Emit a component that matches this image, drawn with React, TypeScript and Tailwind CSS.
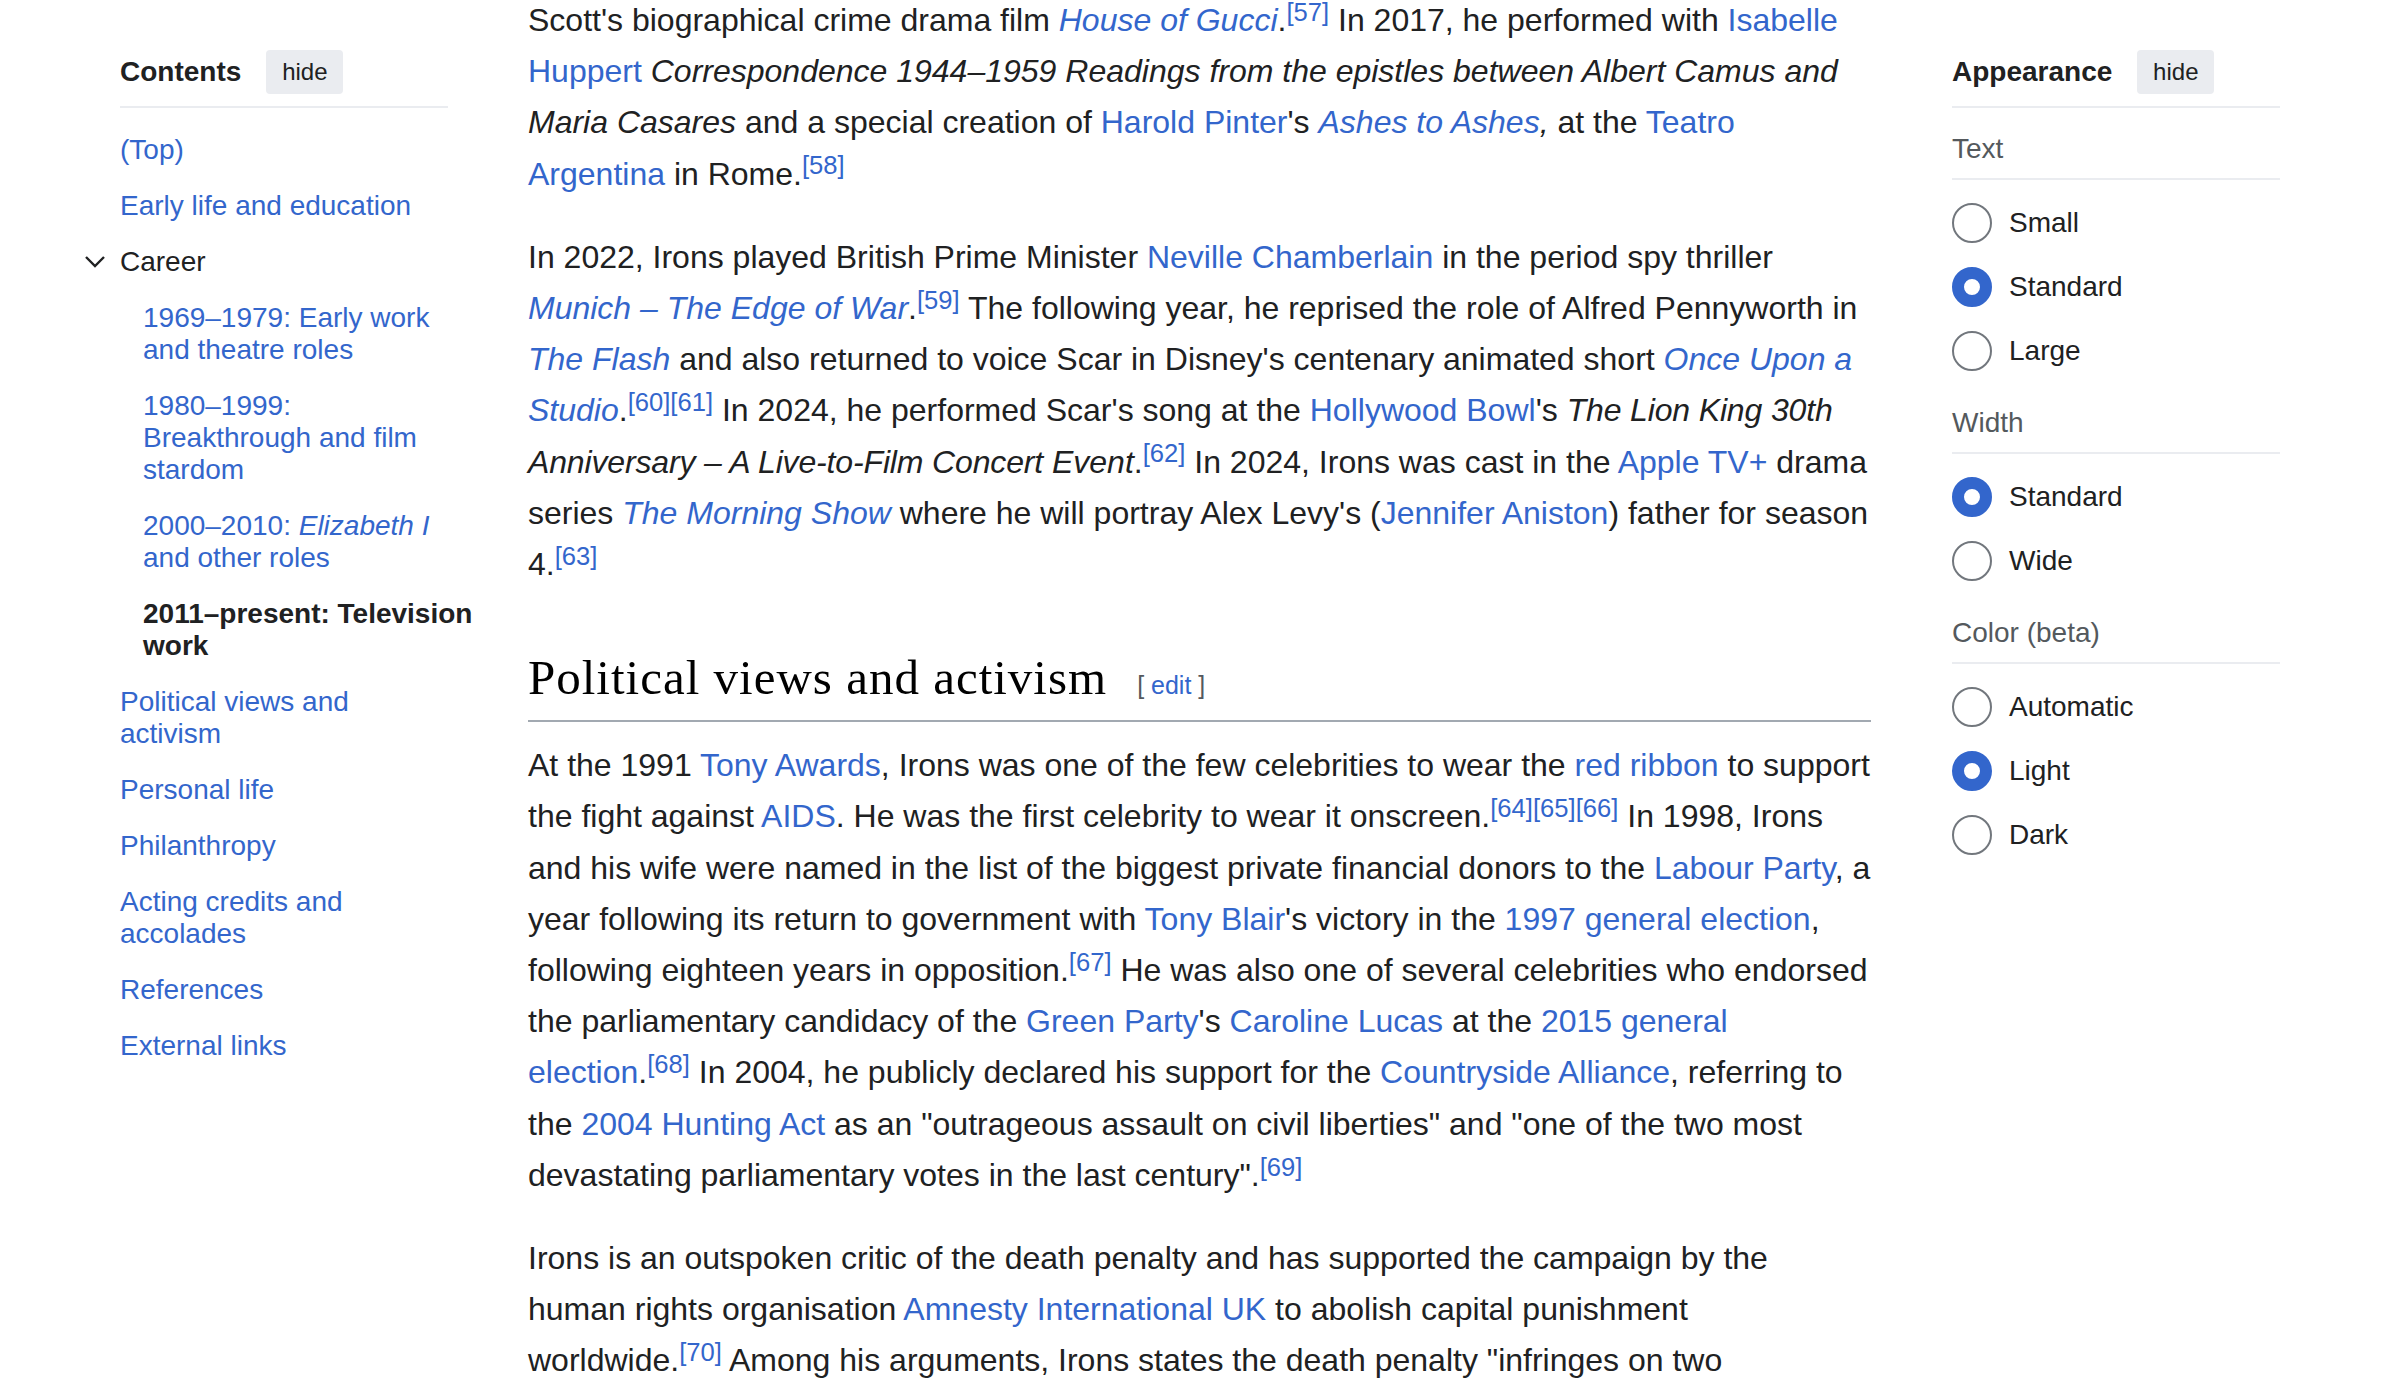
import React from 'react';

const linkCls = 'text-[#3366cc]';

function L({ children, i }: { children: React.ReactNode; i?: boolean }) {
  return <a className={`${linkCls} ${i ? 'italic' : ''}`}>{children}</a>;
}

function Ref({ n }: { n: string }) {
  return <sup className="text-[80%] top-[-0.4em] text-[#3366cc]">[{n}]</sup>;
}

// keeps a word glued to its footnote marker
function W({ children }: { children: React.ReactNode }) {
  return <span className="whitespace-nowrap">{children}</span>;
}

function HideButton() {
  return (
    <button className="ml-[25px] w-[77px] h-[44px] rounded-[4px] bg-[#eaecf0] text-[24px] text-[#202122]">
      hide
    </button>
  );
}

function TocItem({ children, sub, active }: { children: React.ReactNode; sub?: boolean; active?: boolean }) {
  const width = active ? 'w-[365px] pl-[23px]' : sub ? 'w-[341px] pl-[23px]' : 'w-[331px]';
  return (
    <li
      className={`py-[12px] leading-[32px] ${width} ${active ? 'font-bold text-[#202122]' : 'text-[#3366cc]'}`}
    >
      {children}
    </li>
  );
}

function Contents() {
  return (
    <nav className="w-[328px] shrink-0 text-[28px]">
      <div className="mt-[50px] flex items-center pb-[12px] border-b-2 border-[#eaecf0]">
        <span className="font-bold">Contents</span>
        <HideButton />
      </div>
      <ul className="mt-[14px]">
        <TocItem>(Top)</TocItem>
        <TocItem>Early life and education</TocItem>
        <li className="py-[12px] leading-[32px] flex items-center -ml-[37px]">
          <svg width="24" height="14" viewBox="0 0 24 14" className="mr-[13px]">
            <path d="M3 2 L12 11 L21 2" fill="none" stroke="#202122" strokeWidth="2.4" />
          </svg>
          <span>Career</span>
        </li>
        <TocItem sub>1969–1979: Early work and theatre roles</TocItem>
        <TocItem sub>1980–1999: Breakthrough and film stardom</TocItem>
        <TocItem sub>
          2000–2010: <i>Elizabeth I</i> and other roles
        </TocItem>
        <TocItem sub active>
          2011–present: Television work
        </TocItem>
        <TocItem>Political views and activism</TocItem>
        <TocItem>Personal life</TocItem>
        <TocItem>Philanthropy</TocItem>
        <TocItem>Acting credits and accolades</TocItem>
        <TocItem>References</TocItem>
        <TocItem>External links</TocItem>
      </ul>
    </nav>
  );
}

function Radio({ label, checked }: { label: string; checked?: boolean }) {
  return (
    <label className="flex items-center h-[40px]">
      <span
        className={`w-[40px] h-[40px] rounded-full bg-white ${
          checked ? 'border-[12px] border-[#3366cc]' : 'border-2 border-[#72777d]'
        }`}
      />
      <span className="ml-[17px]">{label}</span>
    </label>
  );
}

function Group({ title, options, selected }: { title: string; options: string[]; selected: string }) {
  return (
    <div className="mt-[24px]">
      <div className="leading-[32px] pb-[13px] border-b-2 border-[#eaecf0] text-[#54595d]">{title}</div>
      <div className="mt-[23px] flex flex-col gap-[24px]">
        {options.map((o) => (
          <Radio key={o} label={o} checked={o === selected} />
        ))}
      </div>
    </div>
  );
}

function Appearance() {
  return (
    <aside className="w-[328px] ml-[81px] shrink-0 text-[28px]">
      <div className="mt-[50px] flex items-center pb-[12px] border-b-2 border-[#eaecf0]">
        <span className="font-bold">Appearance</span>
        <HideButton />
      </div>
      <div className="mt-[1px] flex flex-col gap-[12px]">
        <Group title="Text" options={['Small', 'Standard', 'Large']} selected="Standard" />
        <Group title="Width" options={['Standard', 'Wide']} selected="Standard" />
        <Group title="Color (beta)" options={['Automatic', 'Light', 'Dark']} selected="Light" />
      </div>
    </aside>
  );
}

function Article() {
  return (
    <main className="w-[1343px] ml-[80px] shrink-0 -mt-[5px] text-[32px] leading-[51.2px]">
      <p className="mb-[32px]">
        Scott's biographical crime drama film{' '}
        <W>
          <L i>House of Gucci</L>.<Ref n="57" />
        </W>{' '}
        In 2017, he performed with <L>Isabelle Huppert</L>{' '}
        <i>Correspondence 1944–1959 Readings from the epistles between Albert Camus and Maria Casares</i> and a special
        creation of <L>Harold Pinter</L>'s <L i>Ashes to Ashes</L>
        <i>,</i> at the <L>Teatro Argentina</L> in{' '}
        <W>
          Rome.
          <Ref n="58" />
        </W>
      </p>
      <p className="mb-[32px]">
        In 2022, Irons played British Prime Minister <L>Neville Chamberlain</L> in the period spy thriller{' '}
        <L i>Munich – The Edge of</L>{' '}
        <W>
          <L i>War</L>.<Ref n="59" />
        </W>{' '}
        The following year, he reprised the role of Alfred Pennyworth in <L i>The Flash</L> and also returned to voice
        Scar in Disney's centenary animated short <L i>Once Upon a</L>{' '}
        <W>
          <L i>Studio</L>.<Ref n="60" />
          <Ref n="61" />
        </W>{' '}
        In 2024, he performed Scar's song at the <L>Hollywood Bowl</L>'s{' '}
        <i className="tracking-[-0.15px]">The Lion King 30th Anniversary – A Live-to-Film Concert</i>{' '}
        <W>
          <i>Event</i>.<Ref n="62" />
        </W>{' '}
        In 2024, Irons was cast in the <L>Apple TV+</L> drama series <L i>The Morning Show</L> where he will portray
        Alex Levy's (<L>Jennifer Aniston</L>) father for season{' '}
        <W>
          4.<Ref n="63" />
        </W>
      </p>
      <h2 className="mt-[57px] pb-[4px] border-b-2 border-[#a2a9b1] leading-[62px]">
        <span className="font-['Liberation_Serif',serif] text-[49px] tracking-[1px] text-[#000]">
          Political views and activism
        </span>
        <span className="ml-[30px] text-[25px] text-[#54595d]">
          [ <a className={linkCls}>edit</a> ]
        </span>
      </h2>
      <p className="mt-[18px] mb-[32px]">
        At the 1991 <L>Tony Awards</L>, Irons was one of the few celebrities to wear the <L>red ribbon</L> to support
        the fight against <L>AIDS</L>. He was the first celebrity to wear it{' '}
        <W>
          onscreen.
          <Ref n="64" />
          <Ref n="65" />
          <Ref n="66" />
        </W>{' '}
        In 1998, Irons and his wife were named in the list of the biggest private financial donors to the{' '}
        <L>Labour Party</L>, a year following its return to government with <L>Tony Blair</L>'s victory in the{' '}
        <L>1997 general election</L>, following eighteen years in{' '}
        <W>
          opposition.
          <Ref n="67" />
        </W>{' '}
        He was also one of several celebrities who endorsed the parliamentary candidacy of the <L>Green Party</L>'s{' '}
        <L>Caroline Lucas</L> at the <L>2015 general</L>{' '}
        <W>
          <L>election</L>.<Ref n="68" />
        </W>{' '}
        In 2004, he publicly declared his support for the <L>Countryside Alliance</L>, referring to the{' '}
        <L>2004 Hunting Act</L> as an "outrageous assault on civil liberties" and "one of the two most devastating
        parliamentary votes in the last{' '}
        <W>
          century".
          <Ref n="69" />
        </W>
      </p>
      <p className="mb-[32px]">
        Irons is an outspoken critic of the death penalty and has supported the campaign by the human rights
        organisation <L>Amnesty International UK</L> to abolish capital punishment{' '}
        <W>
          worldwide.
          <Ref n="70" />
        </W>{' '}
        Among his arguments, Irons states the death penalty "infringes on two fundamental human rights: the right to
        life and the right to live free from torture, cruel, inhuman or degrading treatment or punishment".
      </p>
    </main>
  );
}

export default function App() {
  return (
    <div className="h-[1398px] overflow-hidden bg-white text-[#202122] font-['Liberation_Sans',Arial,sans-serif]">
      <div className="flex items-start pl-[120px]">
        <Contents />
        <Article />
        <Appearance />
      </div>
    </div>
  );
}
